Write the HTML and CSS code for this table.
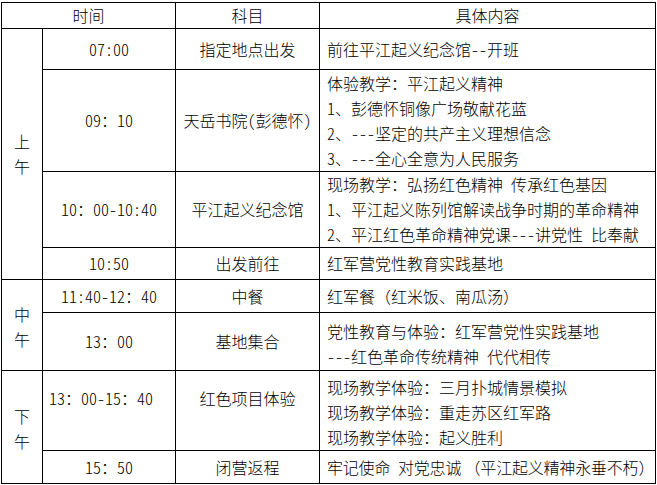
FILE: index.html
```html
<!DOCTYPE html>
<html lang="zh-CN">
<head>
<meta charset="utf-8">
<title>日程安排</title>
<link rel="stylesheet" href="styles.css">
</head>
<body>
<table class="schedule">
  <colgroup>
    <col class="c-period">
    <col class="c-time">
    <col class="c-subject">
    <col class="c-content">
  </colgroup>
  <thead>
    <tr class="r-head">
      <th colspan="2">时间</th>
      <th>科目</th>
      <th>具体内容</th>
    </tr>
  </thead>
  <tbody>
    <tr class="r1">
      <td rowspan="4" class="period">上<br>午</td>
      <td class="time">07:00</td>
      <td class="subject">指定地点出发</td>
      <td class="content">前往平江起义纪念馆--开班</td>
    </tr>
    <tr class="r2">
      <td class="time">09：10</td>
      <td class="subject">天岳书院(彭德怀)</td>
      <td class="content">体验教学：平江起义精神<br>1、彭德怀铜像广场敬献花蓝<br>2、---坚定的共产主义理想信念<br>3、---全心全意为人民服务</td>
    </tr>
    <tr class="r3">
      <td class="time">10：00-10:40</td>
      <td class="subject">平江起义纪念馆</td>
      <td class="content">现场教学：弘扬红色精神 传承红色基因<br>1、平江起义陈列馆解读战争时期的革命精神<br>2、平江红色革命精神党课---讲党性 比奉献</td>
    </tr>
    <tr class="r4">
      <td class="time">10:50</td>
      <td class="subject">出发前往</td>
      <td class="content">红军营党性教育实践基地</td>
    </tr>
    <tr class="r5">
      <td rowspan="2" class="period low">中<br>午</td>
      <td class="time">11:40-12：40</td>
      <td class="subject">中餐</td>
      <td class="content">红军餐<span class="fw">（</span>红米饭、南瓜汤<span class="fw">）</span></td>
    </tr>
    <tr class="r6">
      <td class="time">13：00</td>
      <td class="subject">基地集合</td>
      <td class="content low">党性教育与体验：红军营党性实践基地<br>---红色革命传统精神 代代相传</td>
    </tr>
    <tr class="r7">
      <td rowspan="2" class="period low">下<br>午</td>
      <td class="time upper shift">13：00-15：40</td>
      <td class="subject upper">红色项目体验</td>
      <td class="content low">现场教学体验：三月扑城情景模拟<br>现场教学体验：重走苏区红军路<br>现场教学体验：起义胜利</td>
    </tr>
    <tr class="r8">
      <td class="time">15：50</td>
      <td class="subject">闭营返程</td>
      <td class="content tight">牢记使命 对党忠诚<span class="fw"> （</span>平江起义精神永垂不朽<span class="fw">）</span></td>
    </tr>
  </tbody>
</table>
</body>
</html>
```
FILE: styles.css
```css
html, body {
  margin: 0;
  padding: 0;
  background: #ffffff;
}

body {
  font-family: "Noto Sans CJK SC", "Noto Sans", sans-serif;
  font-size: 16px;
  line-height: 25px;
  color: #000000;
}

.schedule {
  margin: 2px 0 0 1px;
  width: 655px;
  table-layout: fixed;
  border-collapse: collapse;
  font-feature-settings: "hwid" 1;
  font-weight: 300;
  text-spacing-trim: space-all;
}

.c-period { width: 41px; }
.c-time { width: 133px; }
.c-subject { width: 144px; }
.c-content { width: 336px; }

.schedule th,
.schedule td {
  border: 1px solid #000000;
  padding: 0;
  vertical-align: middle;
  text-align: center;
  font-weight: 300;
  white-space: nowrap;
}

.schedule td.content {
  text-align: left;
  padding-left: 7px;
}

.schedule td.tight {
  letter-spacing: -0.2px;
}

.fw {
  font-feature-settings: normal;
}

.r-head { height: 26px; }
.r1 { height: 41px; }
.r2 { height: 102px; }
.r3 { height: 76px; }
.r4 { height: 32px; }
.r5 { height: 33px; }
.r6 { height: 58px; }
.r7 { height: 80px; }
.r8 { height: 33px; }

.schedule td.low { padding-top: 4px; }
.schedule td.upper { padding-bottom: 25px; }
.schedule td.shift { padding-right: 16px; }
```
